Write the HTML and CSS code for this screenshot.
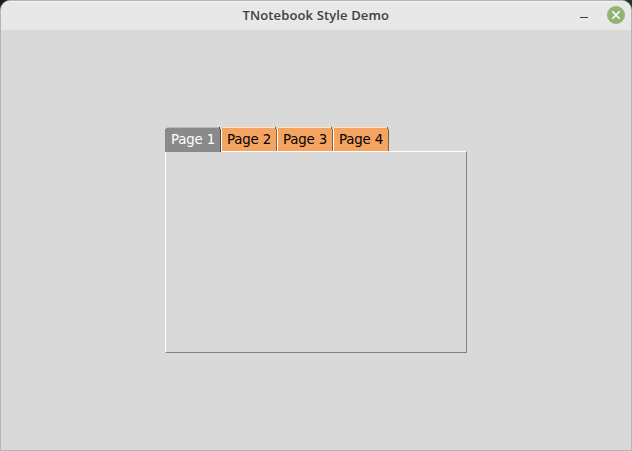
FILE: index.html
```html
<!DOCTYPE html>
<html lang="en">
<head>
<meta charset="utf-8">
<title>TNotebook Style Demo</title>
<link rel="stylesheet" href="styles.css">
</head>
<body>
<div class="window">
  <header class="titlebar">
    <h1 class="title">TNotebook Style Demo</h1>
    <div class="controls">
      <svg class="minimize" width="8" height="2" viewBox="0 0 8 2"><path d="M0 .5h8" stroke="#3c3c3c"/></svg>
      <svg class="close" width="18" height="18" viewBox="0 0 18 18"><circle cx="9" cy="9" r="9" fill="#92b372"/><path d="M5.3 5.3l7.4 7.4M12.7 5.3l-7.4 7.4" stroke="#fff" stroke-width="1.5"/></svg>
    </div>
  </header>
  <main class="content">
    <div class="notebook">
      <div class="tabs">
        <div class="tab selected">Page 1</div>
        <div class="tab">Page 2</div>
        <div class="tab">Page 3</div>
        <div class="tab">Page 4</div>
      </div>
      <div class="pane"></div>
    </div>
  </main>
</div>
</body>
</html>
```
FILE: styles.css
```css
* { box-sizing: border-box; }
body {
  margin: 0;
  height: 451px;
  overflow: hidden;
  background: linear-gradient(90deg, #1e1a20 50%, #1d3a1a 50%) top / 100% 12px no-repeat, #b4b4b4;
}
.window {
  display: flex;
  flex-direction: column;
  height: 451px;
  border: 1px solid #b4b4b4;
  border-radius: 10px 10px 0 0;
  background: #d9d9d9;
  overflow: hidden;
}
.titlebar {
  display: grid;
  grid-template-columns: 1fr auto 1fr;
  align-items: center;
  height: 29px;
  padding-right: 6px;
  background: #e8e8e8;
  box-shadow: inset 0 1px #f2f2f2;
}
.title {
  grid-column: 2;
  margin: 0 0 0 6px;
  width: 147px;
  white-space: nowrap;
  font: 600 13px/29px "Open Sans", "Noto Sans", sans-serif;
  letter-spacing: 0.13px;
  color: #404040;
}
.controls {
  display: flex;
  justify-content: flex-end;
  align-items: center;
  gap: 19px;
  height: 18px;
  margin-bottom: 1px;
}
.minimize { margin-top: 5px; }
.close { display: block; }
.content {
  flex: 1;
  display: flex;
  justify-content: center;
  padding-top: 97px;
}
.notebook { width: 302px; }
.tabs { display: flex; height: 24px; }
.tab {
  position: relative;
  width: 56px;
  padding-left: 5px;
  border: 1px solid;
  border-color: #ffe4bd #8d5c38 #f4a460 #fff;
  border-bottom-width: 0;
  background: #f4a460;
  color: #000;
  font: 13.33px/24px "DejaVu Sans", sans-serif;
  letter-spacing: -0.15px;
  white-space: nowrap;
  clip-path: polygon(0 2px, 1px 2px, 1px 1px, 2px 1px, 2px 0, 55px 0, 55px 2px, 56px 2px, 56px 100%, 0 100%);
}
.tab::after {
  content: "";
  position: absolute;
  top: -1px;
  right: 0;
  width: 1px;
  height: 2px;
  background: #8d5c38;
}
.selected {
  height: 25px;
  border-color: #b8b8b8 #484848 #8a8a8a #8a8a8a;
  background: #8a8a8a;
  color: #fff;
}
.selected::after { background: #484848; }
.pane {
  height: 202px;
  border: 1px solid;
  border-color: #fff #828282 #828282 #fff;
}
```
